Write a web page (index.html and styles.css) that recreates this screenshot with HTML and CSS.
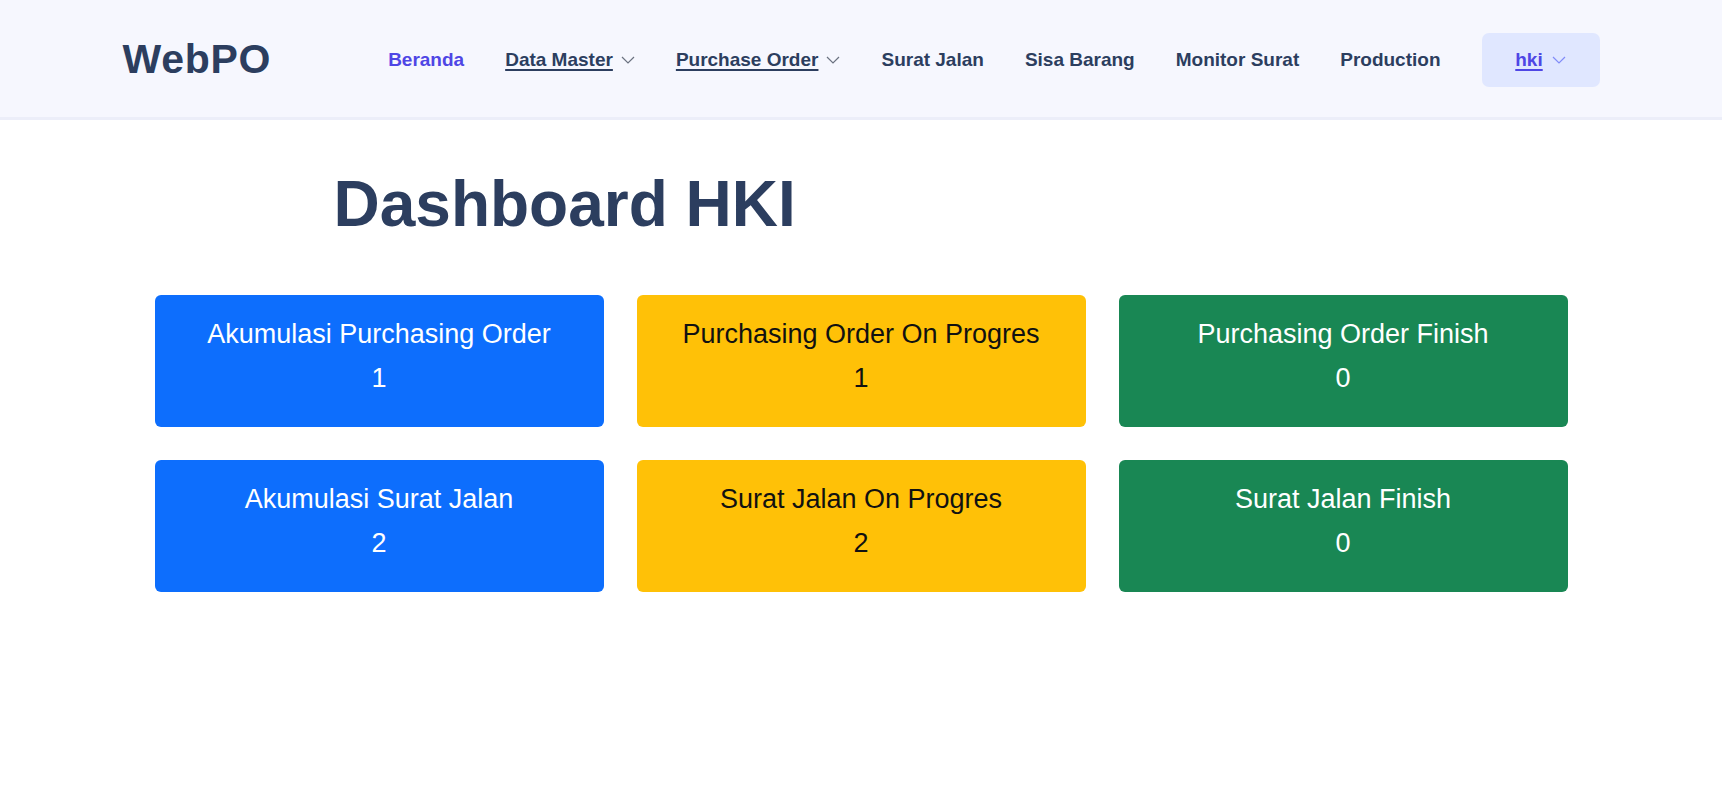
FILE: index.html
```html
<!DOCTYPE html>
<html lang="id">
<head>
<meta charset="utf-8">
<title>WebPO - Dashboard HKI</title>
<link rel="stylesheet" href="styles.css">
</head>
<body>
<header class="topbar">
  <div class="topbar-inner">
    <a class="logo" href="#">WebPO</a>
    <nav class="nav">
      <a class="nav-link active" href="#">Beranda</a>
      <a class="nav-link dropdown" href="#"><span class="u">Data Master</span><svg class="chev" viewBox="0 0 14 8"><path d="M1 1l6 6 6-6"/></svg></a>
      <a class="nav-link dropdown" href="#"><span class="u">Purchase Order</span><svg class="chev" viewBox="0 0 14 8"><path d="M1 1l6 6 6-6"/></svg></a>
      <a class="nav-link" href="#">Surat Jalan</a>
      <a class="nav-link" href="#">Sisa Barang</a>
      <a class="nav-link" href="#">Monitor Surat</a>
      <a class="nav-link" href="#">Production</a>
      <a class="user-btn" href="#"><span class="u">hki</span><svg class="chev" viewBox="0 0 14 8"><path d="M1 1l6 6 6-6"/></svg></a>
    </nav>
  </div>
</header>
<main class="main">
  <h1 class="page-title">Dashboard HKI</h1>
  <div class="cards">
    <div class="card blue"><div class="card-label">Akumulasi Purchasing Order</div><div class="card-value">1</div></div>
    <div class="card yellow"><div class="card-label">Purchasing Order On Progres</div><div class="card-value">1</div></div>
    <div class="card green"><div class="card-label">Purchasing Order Finish</div><div class="card-value">0</div></div>
    <div class="card blue"><div class="card-label">Akumulasi Surat Jalan</div><div class="card-value">2</div></div>
    <div class="card yellow"><div class="card-label">Surat Jalan On Progres</div><div class="card-value">2</div></div>
    <div class="card green"><div class="card-label">Surat Jalan Finish</div><div class="card-value">0</div></div>
  </div>
</main>
</body>
</html>
```
FILE: styles.css
```css
* { box-sizing: border-box; }
html, body { margin: 0; padding: 0; background: #ffffff; }
body { font-family: "Liberation Sans", Arial, sans-serif; color: #2c3e5f; }
a { text-decoration: none; color: inherit; }

.topbar {
  background: #f6f7fe;
  height: 120px;
  border-bottom: 3px solid #eceef9;
}
.topbar-inner {
  width: 1477px;
  margin: 0 auto;
  height: 117px;
  padding-top: 2px;
  display: flex;
  align-items: center;
  justify-content: space-between;
}
.logo {
  font-size: 41px;
  font-weight: 700;
  color: #2c3e5f;
  letter-spacing: 0.7px;
}
.nav {
  display: flex;
  align-items: center;
  gap: 41px;
}
.nav-link {
  font-size: 19px;
  font-weight: 700;
  color: #2c3e5f;
  display: flex;
  align-items: center;
  gap: 8px;
}
.nav-link.active { color: #4f46e5; }
.u { text-decoration: underline; text-underline-offset: 3px; text-decoration-thickness: 2px; }
.chev {
  width: 14px;
  height: 8px;
  fill: none;
  stroke: #6b7280;
  stroke-width: 1.2;
}
.user-btn {
  height: 54px;
  width: 118px;
  background: #e0e7ff;
  border-radius: 7px;
  display: flex;
  align-items: center;
  justify-content: center;
  gap: 9px;
  font-size: 19px;
  font-weight: 700;
  color: #4f46e5;
}
.user-btn .chev { stroke: #818cf8; }

.main {
  width: 1413px;
  margin: 0 auto;
}
.page-title {
  margin: 46px 0 52px 179px;
  font-size: 64px;
  line-height: 77px;
  font-weight: 700;
  color: #2c3e5f;
}
.cards {
  display: grid;
  grid-template-columns: repeat(3, 1fr);
  column-gap: 33px;
  row-gap: 33px;
}
.card {
  height: 132px;
  border-radius: 6px;
  padding-top: 17px;
  text-align: center;
  font-size: 27px;
  line-height: 44px;
}
.blue { background: #0d6efd; color: #ffffff; }
.yellow { background: #ffc107; color: #111111; }
.green { background: #198754; color: #ffffff; }
```
